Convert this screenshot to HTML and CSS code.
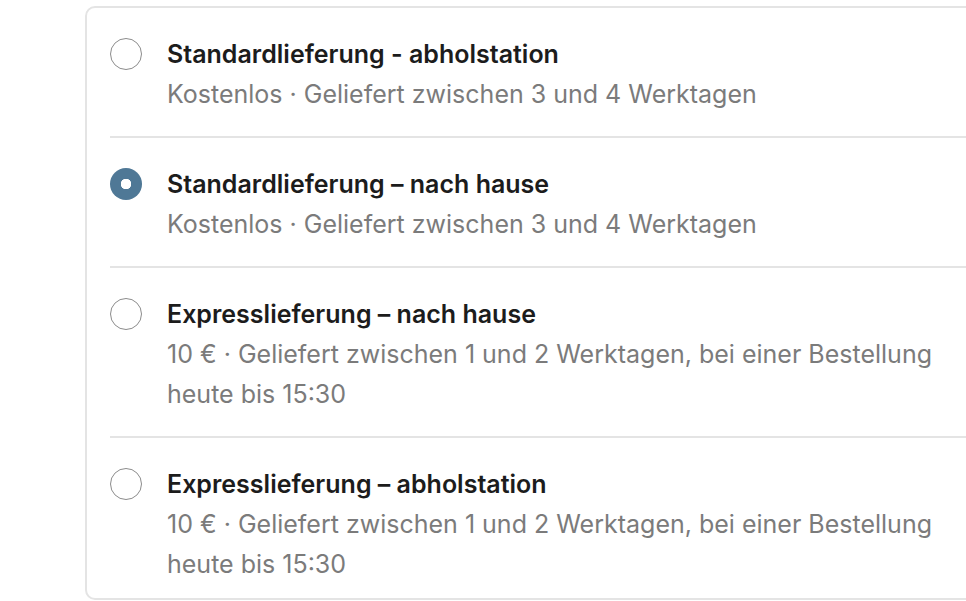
FILE: index.html
```html
<!DOCTYPE html>
<html lang="de">
<head>
    <meta charset="UTF-8">
    <meta name="viewport" content="width=device-width, initial-scale=1.0">
    <title>Versandart</title>
    <link rel="stylesheet" href="styles.css">
</head>
<body>

    <!-- Shipping options -->
    <div class="shipping-card">
        <label class="option">
            <input type="radio" name="shipping" value="standard-pickup">
            <div class="option-text">
                <div class="option-title">Standardlieferung - abholstation</div>
                <div class="option-desc">Kostenlos · Geliefert zwischen 3 und 4 Werktagen</div>
            </div>
        </label>

        <label class="option">
            <input type="radio" name="shipping" value="standard-home" checked>
            <div class="option-text">
                <div class="option-title">Standardlieferung – nach hause</div>
                <div class="option-desc">Kostenlos · Geliefert zwischen 3 und 4 Werktagen</div>
            </div>
        </label>

        <label class="option">
            <input type="radio" name="shipping" value="express-home">
            <div class="option-text">
                <div class="option-title">Expresslieferung – nach hause</div>
                <div class="option-desc">10 € · Geliefert zwischen 1 und 2 Werktagen, bei einer Bestellung heute bis 15:30</div>
            </div>
        </label>

        <label class="option">
            <input type="radio" name="shipping" value="express-pickup">
            <div class="option-text">
                <div class="option-title">Expresslieferung – abholstation</div>
                <div class="option-desc">10 € · Geliefert zwischen 1 und 2 Werktagen, bei einer Bestellung heute bis 15:30</div>
            </div>
        </label>
    </div>

</body>
</html>
```

FILE: styles.css
```css
body {
    font-family: 'Inter', 'Noto Sans', sans-serif;
    background-color: #ffffff;
    margin: 0;
    padding: 6px 0 0 85px;
    overflow: hidden;
}
.shipping-card {
    width: 1000px;
    padding-left: 23px;
    border: 2px solid #e4e4e4;
    border-radius: 10px;
    background-color: white;
}
.option {
    display: flex;
    align-items: flex-start;
    gap: 25px;
    padding: 30px 0 22px 0;
    border-bottom: 2px solid #e4e4e4;
    cursor: pointer;
}
.option:last-child {
    border-bottom: none;
    padding-bottom: 14px;
}
.option input {
    appearance: none;
    flex-shrink: 0;
    width: 32px;
    height: 32px;
    margin: 0;
    border: 1.5px solid #8c8c8c;
    border-radius: 50%;
    background-color: white;
    cursor: pointer;
}
.option input:checked {
    border: none;
    background-color: #4f7896;
    background-image: radial-gradient(circle, #ffffff 0 5px, transparent 5.5px);
}
.option-text {
    width: 790px;
}
.option-title {
    font-size: 25px;
    line-height: 32px;
    font-weight: 600;
    color: #1c1c1c;
}
.option-desc {
    margin-top: 4px;
    font-size: 25px;
    line-height: 40px;
    color: #7b7b7b;
}
```
